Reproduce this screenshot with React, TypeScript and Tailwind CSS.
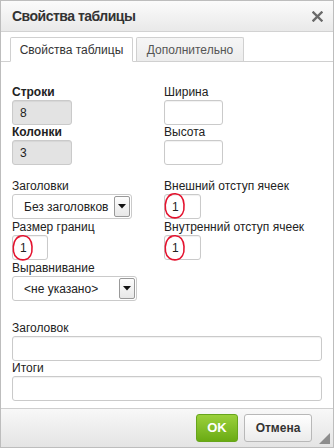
import React from "react";

const Label = ({ children, bold }: { children: React.ReactNode; bold?: boolean }) => (
  <div className={`h-[15px] leading-[15px] text-[12px] text-[#222] ${bold ? "font-bold" : ""}`}>{children}</div>
);

const Input = ({ w, value, disabled }: { w: string; value?: string; disabled?: boolean }) => (
  <div
    className={`${w} h-[25px] rounded-[3px] border border-[#cacaca] flex items-center pl-[7px] text-[12px] text-[#222] shadow-[inset_0_1px_1px_rgba(0,0,0,0.06)] ${
      disabled ? "bg-[#e3e3e3]" : "bg-white"
    }`}
  >
    {value}
  </div>
);

const Select = ({ w, value }: { w: string; value: string }) => (
  <div className={`${w} h-[25px] rounded-[3px] border border-[#cacaca] bg-white flex items-center justify-between pl-[11px] pr-[1px] text-[12px] text-[#222]`}>
    <span>{value}</span>
    <div className="w-[16px] h-[21px] border border-[#999] rounded-[2px] bg-gradient-to-b from-[#fdfdfd] to-[#e8e8e8] flex items-center justify-center">
      <svg width="8" height="5" viewBox="0 0 8 5">
        <path d="M0 0 L8 0 L4 4.5 Z" fill="#111" />
      </svg>
    </div>
  </div>
);

const Circle = ({ className }: { className: string }) => (
  <svg className={`absolute pointer-events-none ${className}`} width="27" height="28" viewBox="0 0 27 28">
    <path
      d="M9 2.5 C3.5 4 1.5 11 2.5 17.5 C3.5 23.5 8 26.5 13.5 25.8 C19 25 21.5 19.5 21 12.5 C20.5 6 18 2.2 12.5 1.8 C9.5 1.6 6.5 3 5.5 4.5"
      fill="none"
      stroke="#e4122e"
      strokeWidth="1.6"
      strokeLinecap="round"
    />
  </svg>
);

export default function App() {
  return (
    <div className="w-[334px] h-[448px] border border-[#bdbdbd] bg-white flex flex-col font-['Liberation_Sans',Arial,sans-serif] overflow-hidden">
      {/* Header */}
      <div className="h-[31px] shrink-0 border-b border-[#d2d2d2] bg-gradient-to-b from-[#fbfbfb] to-[#e9e9e9] flex items-center justify-between pl-[11px] pr-[10px]">
        <span className="text-[14px] tracking-[-0.5px] font-bold text-[#333]">Свойства таблицы</span>
        <svg width="11" height="11" viewBox="0 0 11 11">
          <path d="M1.5 1.5 L9.5 9.5 M9.5 1.5 L1.5 9.5" stroke="#6a6a6a" strokeWidth="2.4" strokeLinecap="square" />
        </svg>
      </div>

      {/* Tabs */}
      <div className="shrink-0 flex items-end gap-[3px] pl-[9px] pt-[5px] border-b border-[#d0d0d0] h-[30px]">
        <div className="h-[25px] w-[123px] -mb-px border border-[#d0d0d0] border-b-white bg-white rounded-t-[2px] flex items-center justify-center text-[12px] text-[#333]">
          Свойства таблицы
        </div>
        <div className="h-[24px] w-[108px] border border-[#d0d0d0] border-b-0 bg-gradient-to-b from-[#f6f6f6] to-[#ececec] rounded-t-[2px] flex items-center justify-center text-[12px] text-[#555]">
          Дополнительно
        </div>
      </div>

      {/* Body */}
      <div className="flex-1 px-[11px] pt-[23px]">
        <div className="grid grid-cols-[152px_1fr]">
          <div>
            <Label bold>Строки</Label>
            <Input w="w-[60px]" value="8" disabled />
          </div>
          <div>
            <Label>Ширина</Label>
            <Input w="w-[59px]" />
          </div>
          <div>
            <Label bold>Колонки</Label>
            <Input w="w-[60px]" value="3" disabled />
          </div>
          <div>
            <Label>Высота</Label>
            <Input w="w-[59px]" />
          </div>
        </div>

        <div className="grid grid-cols-[152px_1fr] mt-[14px]">
          <div>
            <Label>Заголовки</Label>
            <Select w="w-[120px]" value="Без заголовков" />
          </div>
          <div className="relative">
            <Label>Внешний отступ ячеек</Label>
            <Input w="w-[37px]" value="1" />
            <Circle className="left-[-1px] top-[13px]" />
          </div>
          <div className="relative pt-[1px]">
            <Label>Размер границ</Label>
            <Input w="w-[36px]" value="1" />
            <Circle className="left-[-1px] top-[15px]" />
          </div>
          <div className="relative pt-[1px]">
            <Label>Внутренний отступ ячеек</Label>
            <Input w="w-[37px]" value="1" />
            <Circle className="left-[-1px] top-[15px]" />
          </div>
          <div className="pt-[1px]">
            <Label>Выравнивание</Label>
            <Select w="w-[125px]" value="<не указано>" />
          </div>
          <div />
        </div>

        <div className="mt-[20px]">
          <Label>Заголовок</Label>
          <Input w="w-[310px]" />
        </div>
        <div>
          <Label>Итоги</Label>
          <Input w="w-[310px]" />
        </div>
      </div>

      {/* Footer */}
      <div className="relative h-[39px] shrink-0 border-t border-[#cfcfcf] bg-gradient-to-b from-[#f8f8f8] to-[#e4e4e4] flex items-center justify-end gap-[6px] pr-[21px]">
        <div className="w-[42px] h-[28px] rounded-[3px] border border-[#67a51c] bg-gradient-to-b from-[#9bd13b] to-[#6aab12] flex items-center justify-center text-[13px] font-bold text-white">
          OK
        </div>
        <div className="w-[68px] h-[28px] rounded-[3px] border border-[#b8b8b8] bg-gradient-to-b from-[#ffffff] to-[#ebebeb] flex items-center justify-center text-[12px] font-bold text-[#333]">
          Отмена
        </div>
        <svg className="absolute right-[3px] bottom-[3px]" width="11" height="11" viewBox="0 0 11 11">
          <path d="M11 0 L11 11 L0 11 Z" fill="#8d8d8d" />
        </svg>
      </div>
    </div>
  );
}
